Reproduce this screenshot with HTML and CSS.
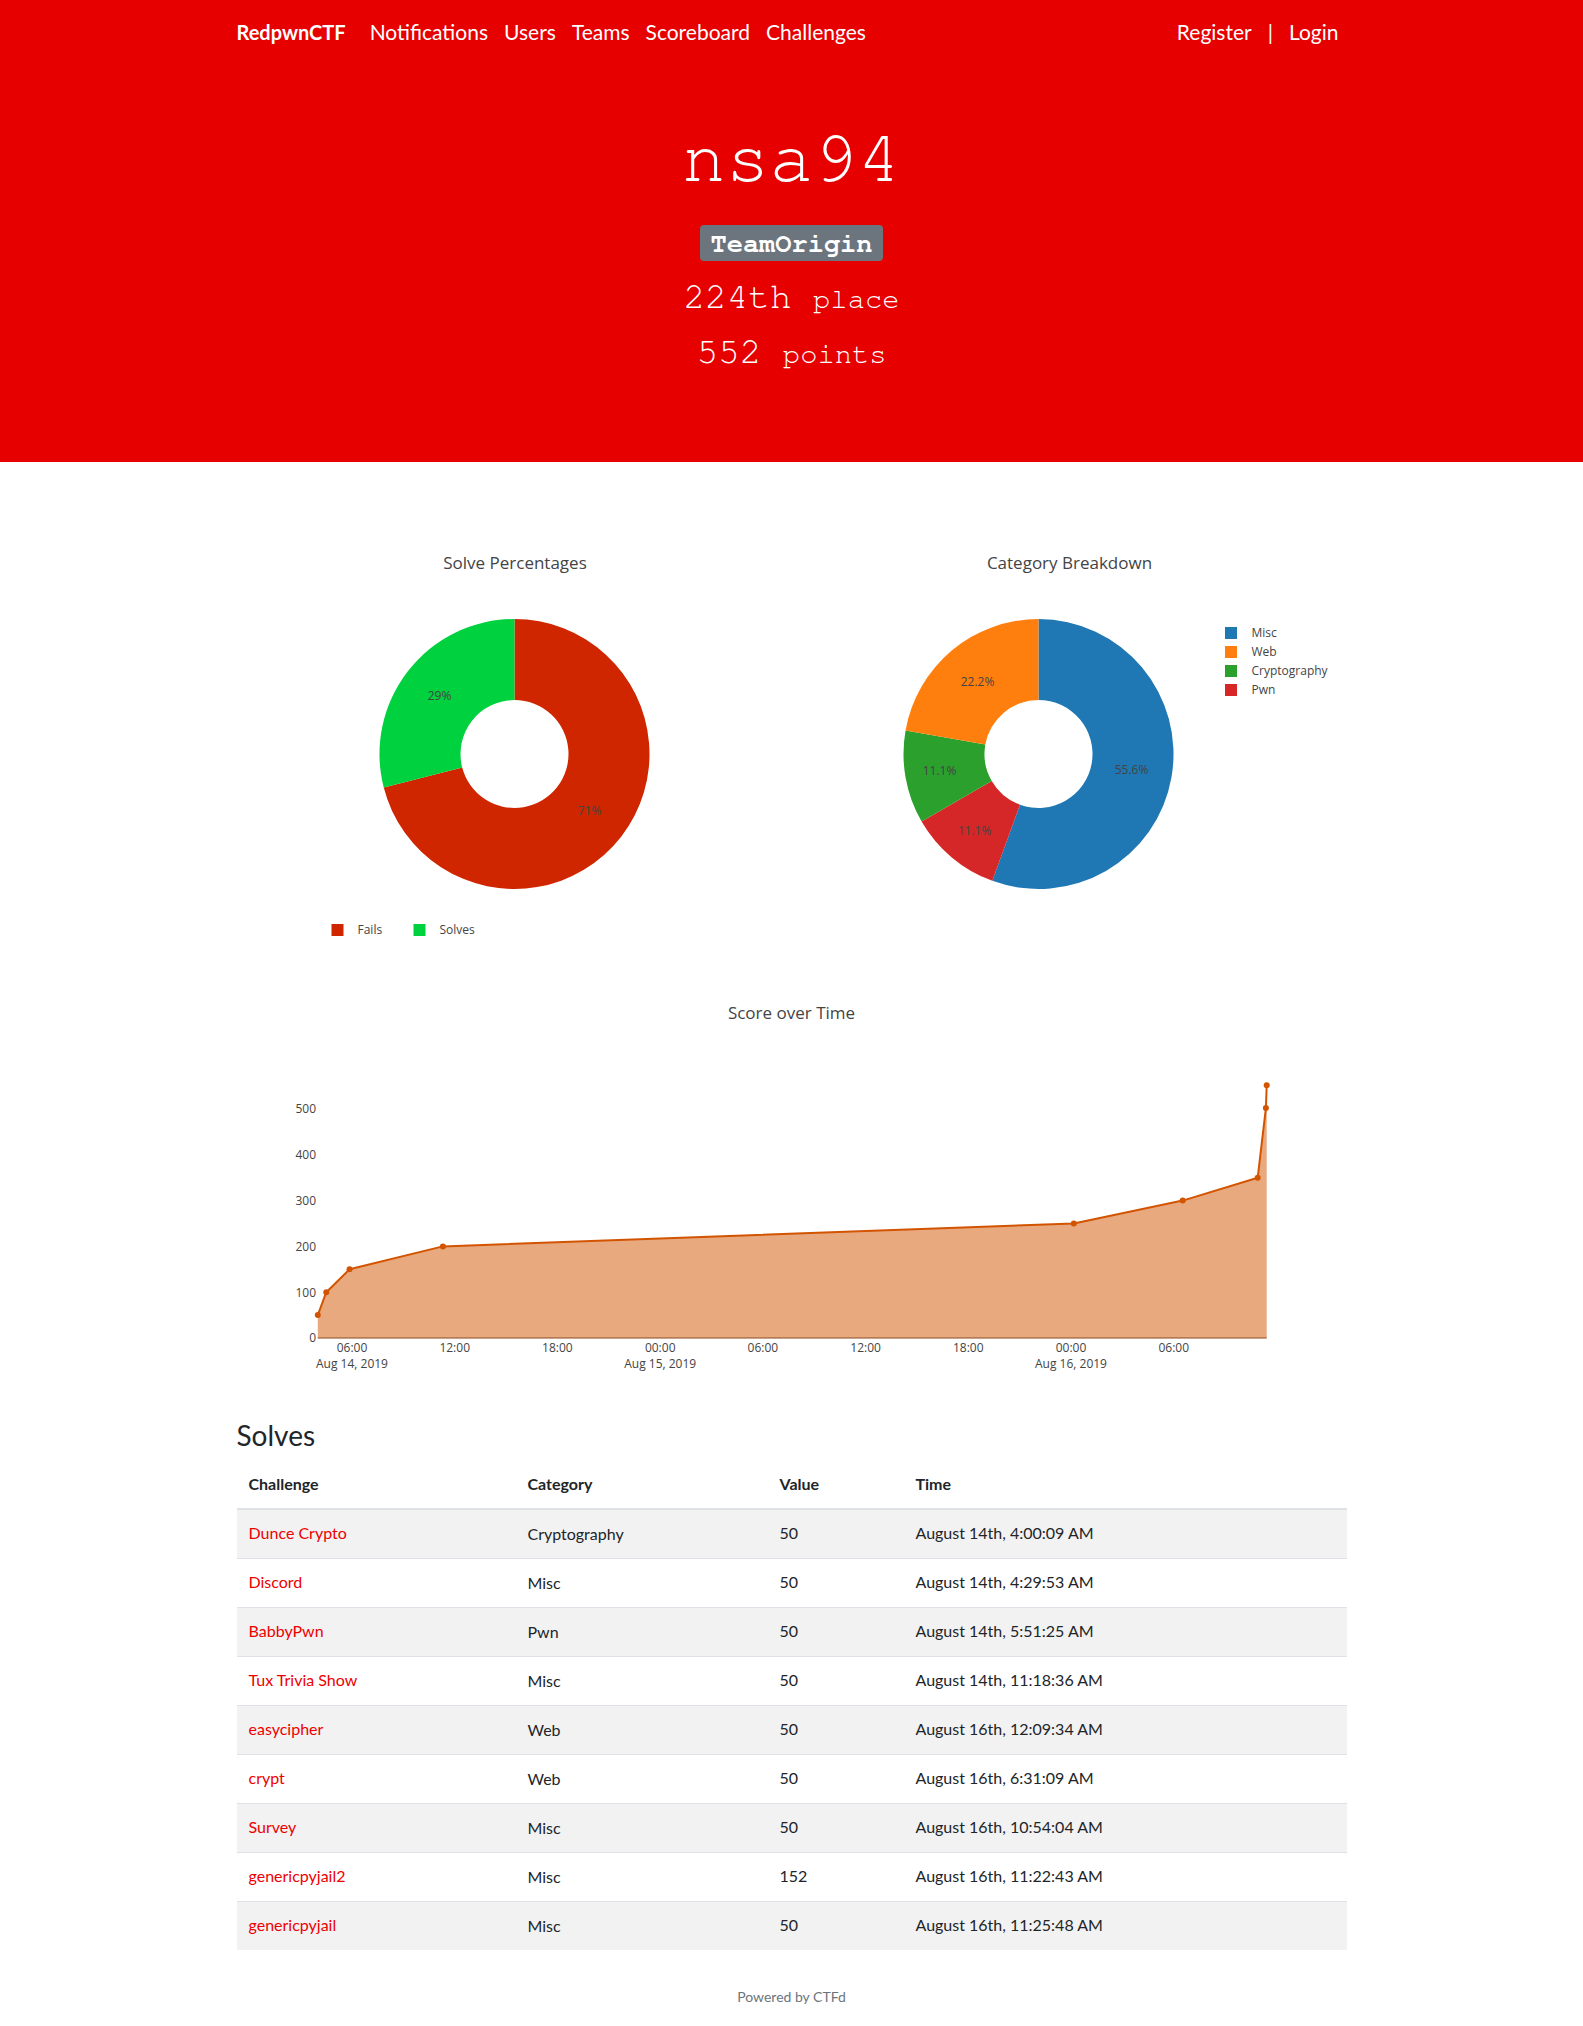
FILE: index.html
```html
<!DOCTYPE html>
<html lang="en">
<head>
<meta charset="utf-8">
<title>nsa94 - RedpwnCTF</title>
<link rel="stylesheet" href="styles.css">
</head>
<body>
<header class="header">
  <nav class="container navbar">
    <a class="brand" href="#">RedpwnCTF</a>
    <ul class="nav-links">
      <li><a class="nav-link" href="#">Notifications</a></li>
      <li><a class="nav-link" href="#">Users</a></li>
      <li><a class="nav-link" href="#">Teams</a></li>
      <li><a class="nav-link" href="#">Scoreboard</a></li>
      <li><a class="nav-link" href="#">Challenges</a></li>
    </ul>
    <ul class="nav-links nav-right">
      <li><a class="nav-link" href="#">Register</a></li>
      <li class="nav-sep">|</li>
      <li><a class="nav-link" href="#">Login</a></li>
    </ul>
  </nav>
  <div class="container hero">
    <h1 class="name">nsa94</h1>
    <div class="team"><span class="badge">TeamOrigin</span></div>
    <h2 class="stat">224th <small>place</small></h2>
    <h2 class="stat stat-points">552 <small>points</small></h2>
  </div>
</header>

<main class="container">
  <div class="pie-row">
    <svg class="pie" width="555" height="450" viewBox="0 0 555 450">
      <text class="chart-title" x="278" y="68" text-anchor="middle">Solve Percentages</text>
      <path d="M 277.5 118 A 135 135 0 1 1 146.74 286.57 L 225.2 266.43 A 54 54 0 1 0 277.5 199 Z" fill="#cf2600"/>
      <path d="M 146.74 286.57 A 135 135 0 0 1 277.5 118 L 277.5 199 A 54 54 0 0 0 225.2 266.43 Z" fill="#00d13f"/>
      <text class="slice-label" x="202.5" y="199" text-anchor="middle">29%</text>
      <text class="slice-label" x="352.5" y="314" text-anchor="middle">71%</text>
      <rect x="94.5" y="423" width="12" height="12" fill="#cf2600"/>
      <text class="legend-text" x="120.5" y="433">Fails</text>
      <rect x="176.5" y="423" width="12" height="12" fill="#00d13f"/>
      <text class="legend-text" x="202.5" y="433">Solves</text>
    </svg>
    <svg class="pie" width="555" height="450" viewBox="0 0 555 450">
      <text class="chart-title" x="277.5" y="68" text-anchor="middle">Category Breakdown</text>
      <path d="M 246.5 118 A 135 135 0 1 1 200.33 379.86 L 228.03 303.74 A 54 54 0 1 0 246.5 199 Z" fill="#1f77b4"/>
      <path d="M 200.33 379.86 A 135 135 0 0 1 129.59 320.5 L 199.73 280 A 54 54 0 0 0 228.03 303.74 Z" fill="#d62728"/>
      <path d="M 129.59 320.5 A 135 135 0 0 1 113.55 229.56 L 193.32 243.62 A 54 54 0 0 0 199.73 280 Z" fill="#2ca02c"/>
      <path d="M 113.55 229.56 A 135 135 0 0 1 246.5 118 L 246.5 199 A 54 54 0 0 0 193.32 243.62 Z" fill="#ff7f0e"/>
      <text class="slice-label" x="185.5" y="185" text-anchor="middle">22.2%</text>
      <text class="slice-label" x="147.5" y="274" text-anchor="middle">11.1%</text>
      <text class="slice-label" x="182.5" y="334" text-anchor="middle">11.1%</text>
      <text class="slice-label" x="339.5" y="273" text-anchor="middle">55.6%</text>
      <rect x="433" y="126" width="12" height="12" fill="#1f77b4"/>
      <text class="legend-text" x="459.5" y="136">Misc</text>
      <rect x="433" y="145" width="12" height="12" fill="#ff7f0e"/>
      <text class="legend-text" x="459.5" y="155">Web</text>
      <rect x="433" y="164" width="12" height="12" fill="#2ca02c"/>
      <text class="legend-text" x="459.5" y="174">Cryptography</text>
      <rect x="433" y="183" width="12" height="12" fill="#d62728"/>
      <text class="legend-text" x="459.5" y="193">Pwn</text>
    </svg>
  </div>

  <svg class="score" width="1110" height="410" viewBox="0 0 1110 410">
    <text class="chart-title" x="554.5" y="48" text-anchor="middle">Score over Time</text>
    <g class="tick-text" text-anchor="end">
      <text x="79" y="142">500</text>
      <text x="79" y="188">400</text>
      <text x="79" y="234">300</text>
      <text x="79" y="280">200</text>
      <text x="79" y="326">100</text>
      <text x="79" y="371">0</text>
    </g>
    <path d="M 80.8 367 L 80.8 344.1 L 89.3 321.2 L 112.55 298.3 L 205.9 275.4 L 836.8 252.5 L 945.7 229.6 L 1020.7 206.7 L 1028.9 137.1 L 1029.7 114.2 L 1029.7 367 Z" fill="rgba(211,84,0,0.5)"/>
    <polyline points="80.8,344.1 89.3,321.2 112.55,298.3 205.9,275.4 836.8,252.5 945.7,229.6 1020.7,206.7 1028.9,137.1 1029.7,114.2" fill="none" stroke="#d35400" stroke-width="2" stroke-linejoin="round"/>
    <g fill="#d35400">
      <circle cx="80.8" cy="344.1" r="3"/>
      <circle cx="89.3" cy="321.2" r="3"/>
      <circle cx="112.55" cy="298.3" r="3"/>
      <circle cx="205.9" cy="275.4" r="3"/>
      <circle cx="836.8" cy="252.5" r="3"/>
      <circle cx="945.7" cy="229.6" r="3"/>
      <circle cx="1020.7" cy="206.7" r="3"/>
      <circle cx="1028.9" cy="137.1" r="3"/>
      <circle cx="1029.7" cy="114.2" r="3"/>
    </g>
    <line x1="80.8" y1="367" x2="1029.7" y2="367" stroke="#8a4a20" stroke-width="1"/>
    <g class="tick-text" text-anchor="middle">
      <text x="115" y="381">06:00</text>
      <text x="217.7" y="381">12:00</text>
      <text x="320.4" y="381">18:00</text>
      <text x="423.2" y="381">00:00</text>
      <text x="525.9" y="381">06:00</text>
      <text x="628.6" y="381">12:00</text>
      <text x="731.3" y="381">18:00</text>
      <text x="834" y="381">00:00</text>
      <text x="936.8" y="381">06:00</text>
      <text x="115" y="397">Aug 14, 2019</text>
      <text x="423.2" y="397">Aug 15, 2019</text>
      <text x="834" y="397">Aug 16, 2019</text>
    </g>
  </svg>

  <h3 class="solves-title">Solves</h3>
  <table class="solves">
    <colgroup>
      <col class="c-chal"><col class="c-cat"><col class="c-val"><col class="c-time">
    </colgroup>
    <thead>
      <tr><th>Challenge</th><th>Category</th><th>Value</th><th>Time</th></tr>
    </thead>
    <tbody>
      <tr><td><a href="#">Dunce Crypto</a></td><td class="cat">Cryptography</td><td>50</td><td>August 14th, 4:00:09 AM</td></tr>
      <tr><td><a href="#">Discord</a></td><td class="cat">Misc</td><td>50</td><td>August 14th, 4:29:53 AM</td></tr>
      <tr><td><a href="#">BabbyPwn</a></td><td class="cat">Pwn</td><td>50</td><td>August 14th, 5:51:25 AM</td></tr>
      <tr><td><a href="#">Tux Trivia Show</a></td><td class="cat">Misc</td><td>50</td><td>August 14th, 11:18:36 AM</td></tr>
      <tr><td><a href="#">easycipher</a></td><td class="cat">Web</td><td>50</td><td>August 16th, 12:09:34 AM</td></tr>
      <tr><td><a href="#">crypt</a></td><td class="cat">Web</td><td>50</td><td>August 16th, 6:31:09 AM</td></tr>
      <tr><td><a href="#">Survey</a></td><td class="cat">Misc</td><td>50</td><td>August 16th, 10:54:04 AM</td></tr>
      <tr><td><a href="#">genericpyjail2</a></td><td class="cat">Misc</td><td>152</td><td>August 16th, 11:22:43 AM</td></tr>
      <tr><td><a href="#">genericpyjail</a></td><td class="cat">Misc</td><td>50</td><td>August 16th, 11:25:48 AM</td></tr>
    </tbody>
  </table>
</main>

<footer class="footer">Powered by CTFd</footer>
</body>
</html>
```

FILE: styles.css
```css
* { box-sizing: border-box; }

html, body {
  margin: 0;
  padding: 0;
  background: #fff;
}

body {
  font-family: Lato, "Liberation Sans", sans-serif;
  font-size: 16px;
  line-height: 1.5;
  color: #212529;
}

a { text-decoration: none; }

.container {
  width: 1110px;
  margin: 0 auto;
}

.header {
  background: #e60000;
  color: #fff;
}

.navbar {
  height: 64px;
  display: flex;
  align-items: center;
}

.brand {
  color: #fff;
  font-weight: 700;
  font-size: 20px;
  line-height: 30px;
  margin-right: 16px;
}

.nav-links {
  display: flex;
  list-style: none;
  margin: 0;
  padding: 0;
}

.nav-right { margin-left: auto; }

.nav-link {
  display: block;
  padding: 0 8px;
  font-size: 21px;
  line-height: 30px;
  color: #fff;
}

.nav-sep {
  padding: 0 8px;
  font-size: 21px;
  line-height: 30px;
  color: #fff;
}

.hero {
  text-align: center;
  padding-bottom: 87.5px;
  font-family: "Nimbus Mono PS", "FreeMono", "Liberation Mono", "DejaVu Sans Mono", monospace;
}

.name {
  margin: 52px 0 0;
  font-size: 73px;
  font-weight: 400;
  line-height: 1.2;
}

.team {
  display: flex;
  justify-content: center;
  margin-top: 21.5px;
}

.badge {
  display: block;
  background: #6c757d;
  color: #fff;
  font-weight: 700;
  font-size: 27px;
  line-height: 27px;
  padding: 4.5px 10.8px;
  border-radius: 4px;
}

.stat {
  margin: 15px 0 0;
  font-size: 36px;
  font-weight: 400;
  line-height: 1.2;
}

.stat-points { margin-top: 12px; }

.stat small {
  font-size: 80%;
}

.pie-row {
  display: flex;
  margin-top: 39px;
}

.pie, .score { display: block; }

.score { margin-top: 20px; }

.chart-title {
  font-family: "Open Sans", sans-serif;
  font-size: 17px;
  fill: #444;
}

.slice-label, .legend-text, .tick-text {
  font-family: "Open Sans", sans-serif;
  font-size: 12px;
  fill: #444;
}

.solves-title {
  margin: 38px 0 7px;
  font-size: 28px;
  font-weight: 400;
  line-height: 1.2;
}

.solves {
  width: 100%;
  border-collapse: collapse;
}

.c-chal { width: 279px; }
.c-cat { width: 252px; }
.c-val { width: 136px; }
.c-time { width: 443px; }

.solves th, .solves td {
  padding: 12px;
  text-align: left;
  vertical-align: top;
  line-height: 24px;
}

.solves thead th {
  font-weight: 700;
  border-bottom: 2px solid #dee2e6;
}

.solves tbody td {
  border-top: 1px solid #dee2e6;
  padding-top: 11.5px;
  padding-bottom: 12.5px;
}

.solves tbody td.cat {
  padding-top: 12.5px;
  padding-bottom: 11.5px;
}

.solves tbody tr:nth-child(odd) {
  background: #f2f2f2;
}

.solves a { color: #ee0000; }

.footer {
  text-align: center;
  padding: 37px 0 21px;
  font-size: 14px;
  line-height: 20px;
  color: #6c757d;
}
```
